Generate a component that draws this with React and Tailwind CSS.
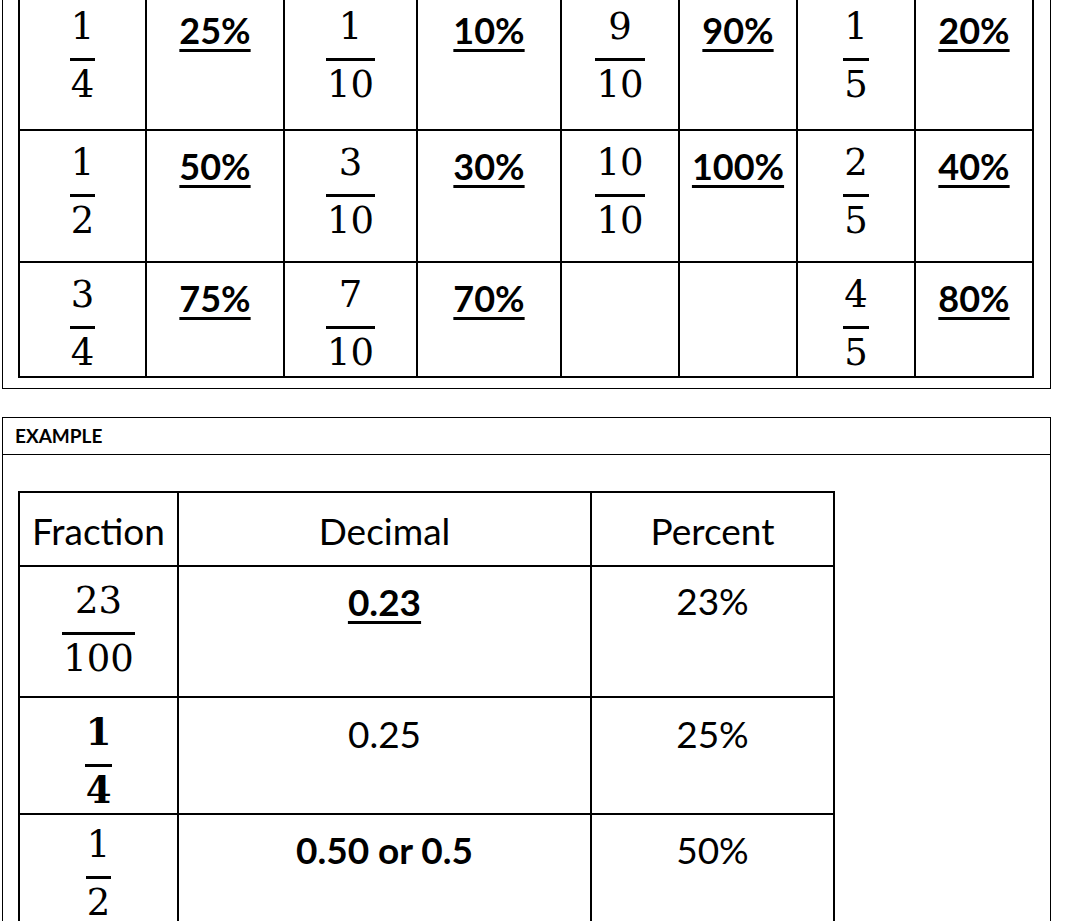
import React from "react";

const Frac = ({ n, d, bold = false, cls = "" }) => (
  <div
    className={`inline-flex flex-col items-stretch font-[DejaVu_Serif,serif] text-[37px] leading-[37px] text-black ${
      bold ? "font-bold" : "font-normal"
    } ${cls}`}
  >
    <span className="px-[1px] text-center">{n}</span>
    <span className="mt-[13px] h-[3px] bg-black" />
    <span className="mt-[5px] px-[1px] text-center">{d}</span>
  </div>
);

const Pct = ({ children }) => (
  <span className="font-['Lato',sans-serif] text-[36px] leading-[36px] font-bold text-black underline decoration-[3px] underline-offset-[5px]">
    {children}
  </span>
);

const rows1 = [
  [["1", "4"], "25%", ["1", "10"], "10%", ["9", "10"], "90%", ["1", "5"], "20%"],
  [["1", "2"], "50%", ["3", "10"], "30%", ["10", "10"], "100%", ["2", "5"], "40%"],
  [["3", "4"], "75%", ["7", "10"], "70%", null, null, ["4", "5"], "80%"],
];

export default function App() {
  return (
    <div className="min-h-[921px] w-full overflow-hidden bg-white text-black">
      <div className="pl-[2px]">
        {/* Box 1 */}
        <div className="-mt-[20px] w-[1049px] border border-black pl-[15px] pt-[12px] pb-[10px]">
          <div className="grid w-[1016px] grid-cols-[127px_138px_133px_144px_118px_118px_118px_118px] grid-rows-[136px_132px_115px] border-l-2 border-t-2 border-black">
            {rows1.map((row, ri) =>
              row.map((cell, ci) => (
                <div
                  key={`${ri}-${ci}`}
                  className={`flex items-start justify-center border-r-2 border-b-2 border-black ${
                    Array.isArray(cell) ? "pt-[13px]" : "pt-[17px]"
                  }`}
                >
                  {Array.isArray(cell) ? (
                    <Frac n={cell[0]} d={cell[1]} />
                  ) : cell ? (
                    <Pct>{cell}</Pct>
                  ) : null}
                </div>
              ))
            )}
          </div>
        </div>

        {/* Box 2 */}
        <div className="mt-[28px] w-[1049px] border border-black">
          <div className="flex h-[37px] items-center border-b border-black pl-[12px] font-['Lato',sans-serif] text-[19px] font-bold">
            EXAMPLE
          </div>
          <div className="pl-[15px] pt-[36px] pb-[40px]">
            <div className="grid w-[817px] grid-cols-[159px_413px_243px] grid-rows-[74px_131px_117px_130px] border-l-2 border-t-2 border-black font-['Lato',sans-serif] text-[37px] leading-[37px]">
              <div className="flex justify-center border-r-2 border-b-2 border-black pt-[19px]">Fraction</div>
              <div className="flex justify-center border-r-2 border-b-2 border-black pt-[19px]">Decimal</div>
              <div className="flex justify-center border-r-2 border-b-2 border-black pt-[19px]">Percent</div>

              <div className="flex items-start justify-center border-r-2 border-b-2 border-black pt-[15px]">
                <Frac n="23" d="100" />
              </div>
              <div className="flex justify-center border-r-2 border-b-2 border-black pt-[16px]">
                <span className="font-bold underline decoration-[3px] underline-offset-[5px]">0.23</span>
              </div>
              <div className="flex justify-center border-r-2 border-b-2 border-black pt-[15px]">23%</div>

              <div className="flex items-start justify-center border-r-2 border-b-2 border-black pt-[16px]">
                <Frac n="1" d="4" bold />
              </div>
              <div className="flex justify-center border-r-2 border-b-2 border-black pt-[17px]">0.25</div>
              <div className="flex justify-center border-r-2 border-b-2 border-black pt-[17px]">25%</div>

              <div className="flex items-start justify-center border-r-2 border-b-2 border-black pt-[11px]">
                <Frac n="1" d="2" />
              </div>
              <div className="flex justify-center border-r-2 border-b-2 border-black pt-[16px]">
                <span className="font-bold">0.50 or 0.5</span>
              </div>
              <div className="flex justify-center border-r-2 border-b-2 border-black pt-[16px]">50%</div>
            </div>
          </div>
        </div>
      </div>
    </div>
  );
}
